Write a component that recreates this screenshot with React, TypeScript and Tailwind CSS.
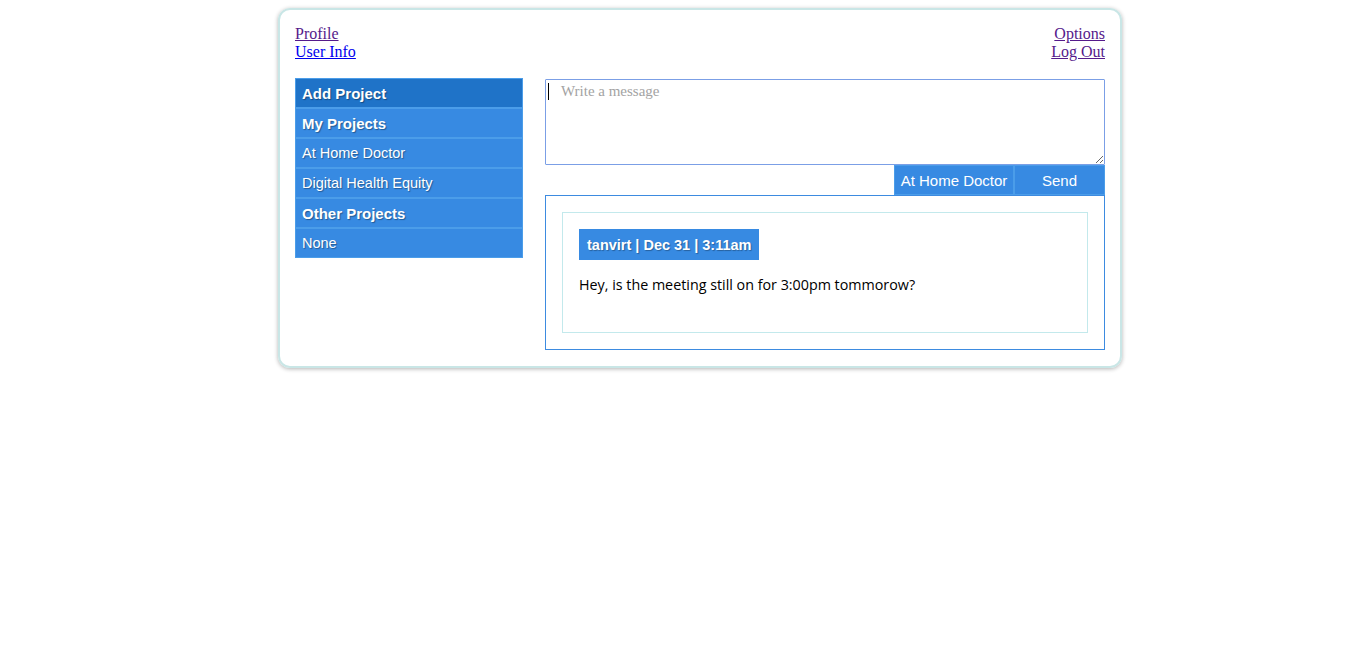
import React from 'react';

const serif = { fontFamily: '"Liberation Serif", "Times New Roman", serif' };
const arial = { fontFamily: '"Liberation Sans", Arial, sans-serif' };
const body = { fontFamily: '"Open Sans", "Noto Sans", sans-serif' };

const rows: { label: string; bold?: boolean; active?: boolean }[] = [
  { label: 'Add Project', bold: true, active: true },
  { label: 'My Projects', bold: true },
  { label: 'At Home Doctor' },
  { label: 'Digital Health Equity' },
  { label: 'Other Projects', bold: true },
  { label: 'None' },
];

const Sidebar: React.FC = () => (
  <div className="w-[228px] shrink-0" style={arial}>
    {rows.map((r) => (
      <div
        key={r.label}
        className={`h-[30px] flex items-center px-[6px] pt-[2px] text-white border border-[#4b9de9] [text-shadow:1px_1px_1px_rgba(0,0,0,0.35)] ${
          r.active ? 'bg-[#1f73c8]' : 'bg-[#378ae2]'
        } ${r.bold ? 'font-bold text-[15px]' : 'text-[14.5px]'}`}
      >
        {r.label}
      </div>
    ))}
  </div>
);

const App: React.FC = () => {
  return (
    <div className="min-h-screen bg-white pt-[8px]">
      <div className="ml-[278px] w-[844px] rounded-[12px] border-2 border-[#c9e6e6] shadow-[0_1px_4px_rgba(0,0,0,0.3)] px-[15px] pt-[15px] pb-[16px]">
        <div className="flex justify-between text-[16px] leading-[18px]" style={serif}>
          <div className="flex flex-col items-start">
            <a href="#" className="underline text-[#551a8b]">Profile</a>
            <a href="#" className="underline text-[#0000ee]">User Info</a>
          </div>
          <div className="flex flex-col items-end">
            <a href="#" className="underline text-[#551a8b]">Options</a>
            <a href="#" className="underline text-[#551a8b]">Log Out</a>
          </div>
        </div>

        <div className="flex gap-[22px] mt-[17px]">
          <Sidebar />
          <div className="w-[560px] flex flex-col">
            <div className="relative mt-[1px]">
              <textarea
                placeholder="Write a message"
                className="block h-[86px] w-full border border-[#7b9fe6] rounded-[1px] pl-[15px] pt-0 text-[15px] outline-none placeholder:text-[#a3a3a3]"
                style={serif}
              />
              <span className="absolute left-[3px] top-[4px] w-px h-[17px] bg-black" />
            </div>
            <div className="flex justify-end" style={arial}>
              <button className="h-[30px] w-[120px] pt-[2px] bg-[#378ae2] border border-[#4b9de9] text-white text-[15px]">
                At Home Doctor
              </button>
              <button className="h-[30px] w-[91px] pt-[2px] bg-[#378ae2] border border-[#4b9de9] text-white text-[15px]">
                Send
              </button>
            </div>
            <div className="border border-[#3d8be0] p-[16px]">
              <div className="border border-[#c3e9ec] p-[16px] pb-[37px]">
                <div
                  className="inline-block bg-[#378ae2] text-white font-bold text-[14.5px] px-[8px] h-[31px] leading-[32px] [text-shadow:1px_1px_1px_rgba(0,0,0,0.3)]"
                  style={arial}
                >
                  tanvirt | Dec 31 | 3:11am
                </div>
                <p className="mt-[14px] text-[14.3px] text-black" style={body}>
                  Hey, is the meeting still on for 3:00pm tommorow?
                </p>
              </div>
            </div>
          </div>
        </div>
      </div>
    </div>
  );
};

export default App;
